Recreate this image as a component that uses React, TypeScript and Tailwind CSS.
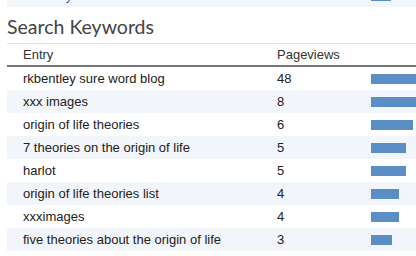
import React from "react";

const rows: [string, number][] = [
  ["rkbentley sure word blog", 48],
  ["xxx images", 8],
  ["origin of life theories", 6],
  ["7 theories on the origin of life", 5],
  ["harlot", 5],
  ["origin of life theories list", 4],
  ["xxximages", 4],
  ["five theories about the origin of life", 3],
];

export default function App() {
  return (
    <div className="w-[416px] h-[256px] overflow-hidden bg-white pl-[7px]" style={{ fontFamily: "Arial, 'Liberation Sans', sans-serif" }}>
      <div className="w-[420px]">
        <div className="h-[9px] overflow-hidden">
          <div className="-mt-[16px] h-[23px] bg-[#f2f5fa] flex items-center text-[13px]">
            <div className="w-[270px] shrink-0 pl-[16px] text-[#2a5db0]">search.yahoo.com</div>
            <div className="w-[94px] shrink-0 text-[#222]">11</div>
            <div className="h-[10px] w-[20px] shrink-0 bg-[#5b8ec4]" />
          </div>
        </div>
        <div className="h-[34px] flex items-start pt-[6px] text-[19.5px] leading-[24px] text-[#444]" style={{ fontFamily: "Lato, sans-serif" }}>
          Search Keywords
        </div>
        <div className="h-px bg-[#e6e6e6]" />
        <div className="h-[21px] flex items-center text-[13px] text-[#333] border-b-2 border-[#777] box-content">
          <div className="w-[270px] shrink-0 pl-[16px]">Entry</div>
          <div className="w-[94px] shrink-0">Pageviews</div>
        </div>
        {rows.map(([k, v], i) => (
          <div key={i} className={`h-[23px] flex items-center text-[13px] text-[#222] ${i % 2 === 1 ? "bg-[#f2f5fa]" : "bg-white"}`}>
            <div className="w-[270px] shrink-0 pl-[16px] whitespace-nowrap">{k}</div>
            <div className="w-[94px] shrink-0">{v}</div>
            <div className="h-[10px] shrink-0 bg-[#5b8ec4]" style={{ width: Math.min(v * 7, 60) }} />
          </div>
        ))}
      </div>
    </div>
  );
}
